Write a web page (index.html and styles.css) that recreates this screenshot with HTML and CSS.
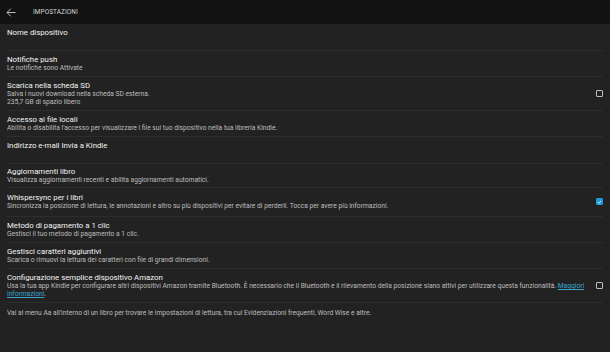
FILE: index.html
```html
<!DOCTYPE html>
<html lang="it">
<head>
  <meta charset="UTF-8" />
  <title>Impostazioni</title>
  <link rel="stylesheet" href="styles.css">
</head>
<body>

  <div class="header">
    <svg class="back" width="10" height="9" viewBox="0 0 10 9">
      <path d="M9.5 4.5H1M4.8 0.7L1 4.5l3.8 3.8" fill="none" stroke="#cfcfcf" stroke-width="0.9"/>
    </svg>
    <span class="titolo">IMPOSTAZIONI</span>
  </div>

  <div class="lista">
    <div class="voce alta">
      <div class="testo">
        <div class="nome">Nome dispositivo</div>
      </div>
    </div>

    <div class="voce">
      <div class="testo">
        <div class="nome">Notifiche push</div>
        <div class="desc">Le notifiche sono Attivate</div>
      </div>
    </div>

    <div class="voce">
      <div class="testo">
        <div class="nome">Scarica nella scheda SD</div>
        <div class="desc">Salva i nuovi download nella scheda SD esterna.<br>235,7 GB di spazio libero</div>
      </div>
      <span class="check"></span>
    </div>

    <div class="voce">
      <div class="testo">
        <div class="nome">Accesso ai file locali</div>
        <div class="desc">Abilita o disabilita l'accesso per visualizzare i file sul tuo dispositivo nella tua libreria Kindle.</div>
      </div>
    </div>

    <div class="voce alta">
      <div class="testo">
        <div class="nome">Indirizzo e-mail Invia a Kindle</div>
      </div>
    </div>

    <div class="voce stretta">
      <div class="testo">
        <div class="nome">Aggiornamenti libro</div>
        <div class="desc">Visualizza aggiornamenti recenti e abilita aggiornamenti automatici.</div>
      </div>
    </div>

    <div class="voce larga">
      <div class="testo">
        <div class="nome">Whispersync per i libri</div>
        <div class="desc">Sincronizza la posizione di lettura, le annotazioni e altro su più dispositivi per evitare di perderli. Tocca per avere più informazioni.</div>
      </div>
      <span class="check attivo">
        <svg width="6" height="6" viewBox="0 0 6 6"><path d="M1 3.2l1.3 1.3L5 1.6" fill="none" stroke="#fff" stroke-width="1"/></svg>
      </span>
    </div>

    <div class="voce">
      <div class="testo">
        <div class="nome">Metodo di pagamento a 1 clic</div>
        <div class="desc">Gestisci il tuo metodo di pagamento a 1 clic.</div>
      </div>
    </div>

    <div class="voce">
      <div class="testo">
        <div class="nome">Gestisci caratteri aggiuntivi</div>
        <div class="desc">Scarica o rimuovi la lettura dei caratteri con file di grandi dimensioni.</div>
      </div>
    </div>

    <div class="voce">
      <div class="testo">
        <div class="nome">Configurazione semplice dispositivo Amazon</div>
        <div class="desc">Usa la tua app Kindle per configurare altri dispositivi Amazon tramite Bluetooth. È necessario che il Bluetooth e il rilevamento della posizione siano attivi per utilizzare questa funzionalità. <a href="#">Maggiori informazioni</a>.</div>
      </div>
      <span class="check"></span>
    </div>

    <div class="nota">Vai al menu Aa all'interno di un libro per trovare le impostazioni di lettura, tra cui Evidenziazioni frequenti, Word Wise e altre.</div>
  </div>

</body>
</html>
```

FILE: styles.css
```css
* {
  box-sizing: border-box;
  margin: 0;
  padding: 0;
}

body {
  font-family: 'Roboto', sans-serif;
  background-color: #222222;
  color: #e6e6e6;
  height: 100vh;
}

.header {
  background-color: #121212;
  height: 24px;
  display: flex;
  align-items: center;
  padding-left: 6px;
}

.back {
  margin-right: 17px;
}

.titolo {
  font-size: 6.4px;
  color: #d8d8d8;
  letter-spacing: 0.1px;
}

.lista {
  padding: 0 7px;
}

.voce {
  display: flex;
  align-items: center;
  border-bottom: 1px solid #2d2d2d;
  padding: 4px 0 4px;
}

.voce.alta {
  align-items: flex-start;
  height: 27px;
}

.voce.stretta {
  padding: 3px 0 3px;
}

.voce.larga {
  padding: 5px 0 6px;
}

.testo {
  flex: 1;
}

.nome {
  font-size: 7.8px;
  line-height: 9px;
  color: #f4f4f4;
}

.desc {
  font-size: 6.7px;
  line-height: 8px;
  color: #bdbdbd;
}

.desc a {
  color: #3ba4cf;
}

.check {
  flex-shrink: 0;
  width: 7px;
  height: 7px;
  border: 1px solid #bdbdbd;
  border-radius: 1px;
  margin-left: 5px;
  display: flex;
  align-items: center;
  justify-content: center;
}

.check.attivo {
  background-color: #1e9ad6;
  border-color: #1e9ad6;
}

.nota {
  font-size: 6.7px;
  line-height: 8px;
  color: #bdbdbd;
  padding-top: 6px;
}
```
